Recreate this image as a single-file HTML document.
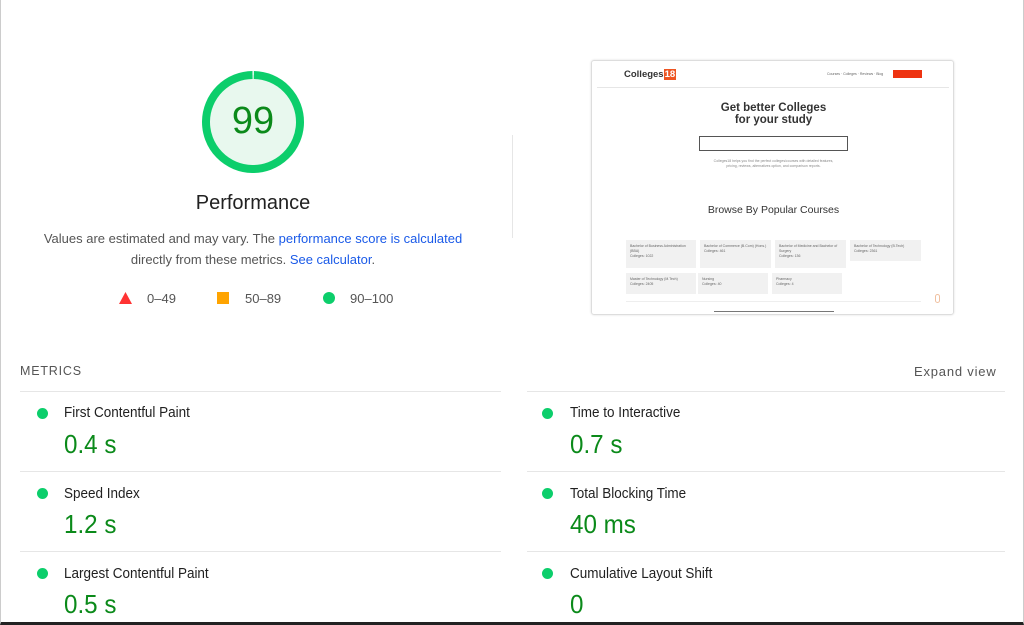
<!DOCTYPE html>
<html><head><meta charset="utf-8"><style>
*{margin:0;padding:0;box-sizing:border-box}
body{width:1024px;height:625px;overflow:hidden;background:#fff;font-family:"Liberation Sans",Arial,sans-serif;position:relative;color:#212121}
.a{position:absolute}
.frame{left:0;top:0;width:1024px;height:625px;border-left:1px solid #ccc;border-right:1px solid #ccc;border-bottom:3px solid #222}
.c{text-align:center}
.desc{left:20px;width:466px;top:228px;font-size:13px;line-height:21px;color:#555;text-align:center}
.desc span{color:#1a5ae8}
.line{height:1px;background:#e6e6e6}
.dot{width:11px;height:11px;border-radius:50%;background:#0cce6b}
.t{font-size:14.5px;color:#212121;transform:scaleX(.93);transform-origin:left}
.v{font-size:26px;color:#0b8a1a;transform:scaleX(.93);transform-origin:left}
.ss{left:591px;top:60px;width:363px;height:255px;border:1px solid #ddd;border-radius:3px;box-shadow:0 0 2px #ddd;overflow:hidden}
.card{background:#f1f1f1;font-size:3.5px;color:#666;padding:4px;line-height:5px}
</style></head><body>
<div class="a frame"></div>
<svg class="a" style="left:200px;top:69px" width="106" height="106">
<circle cx="53" cy="53" r="47" fill="#e8f8ee" stroke="#0cce6b" stroke-width="8" stroke-dasharray="293.5 2" transform="rotate(-89 53 53)"/>
</svg>
<div class="a c" style="left:200px;top:101px;width:106px;font-size:38px;color:#0b8a1a;line-height:44px;top:99px">99</div>
<div class="a c" style="left:153px;top:192px;width:200px;font-size:20px;color:#212121">Performance</div>
<div class="a desc">Values are estimated and may vary. The <span>performance score is calculated</span><br>directly from these metrics. <span>See calculator</span>.</div>
<svg class="a" style="left:119px;top:292px" width="13" height="12"><polygon points="6.5,0 13,12 0,12" fill="#f33"/></svg>
<div class="a" style="left:147px;top:291px;font-size:13px;color:#555">0–49</div>
<div class="a" style="left:217px;top:292px;width:12px;height:12px;background:#ffa400"></div>
<div class="a" style="left:245px;top:291px;font-size:13px;color:#555">50–89</div>
<div class="a dot" style="left:323px;top:292px;width:12px;height:12px"></div>
<div class="a" style="left:350px;top:291px;font-size:13px;color:#555">90–100</div>
<div class="a" style="left:512px;top:135px;width:1px;height:103px;background:#e6e6e6"></div>

<div class="a ss">
 <div class="a" style="left:32px;top:8px;font-size:9.5px;font-weight:bold;color:#333">Colleges<span style="background:#e52;color:#fff;padding:0 1px">18</span></div>
 <div class="a" style="left:235px;top:11px;font-size:3.5px;color:#666">Courses · Colleges · Reviews · Blog</div>
 <div class="a" style="left:301px;top:9px;width:29px;height:8px;background:#e31"></div>
 <div class="a line" style="left:5px;top:26px;width:352px"></div>
 <div class="a c" style="left:80px;top:41px;width:203px;font-size:11.5px;font-weight:bold;color:#333;line-height:12px">Get better Colleges<br>for your study</div>
 <div class="a" style="left:107px;top:75px;width:149px;height:15px;border:1.5px solid #555"></div>
 <div class="a c" style="left:100px;top:98px;width:163px;font-size:3.5px;color:#888;line-height:5px">Colleges18 helps you find the perfect colleges/courses with detailed features,<br>pricing, reviews, alternatives option, and comparison reports.</div>
 <div class="a c" style="left:80px;top:143px;width:203px;font-size:10.5px;color:#333">Browse By Popular Courses</div>
 <div class="a card" style="left:34px;top:179px;width:70px;height:28px">Bachelor of Business Administration (BBA)<br>Colleges: 1022</div>
 <div class="a card" style="left:108px;top:179px;width:71px;height:28px">Bachelor of Commerce (B.Com) (Hons.)<br>Colleges: 461</div>
 <div class="a card" style="left:183px;top:179px;width:71px;height:28px">Bachelor of Medicine and Bachelor of Surgery<br>Colleges: 136</div>
 <div class="a card" style="left:258px;top:179px;width:71px;height:21px">Bachelor of Technology (B.Tech)<br>Colleges: 2361</div>
 <div class="a card" style="left:34px;top:212px;width:70px;height:21px">Master of Technology (M.Tech)<br>Colleges: 2405</div>
 <div class="a card" style="left:106px;top:212px;width:70px;height:21px">Nursing<br>Colleges: 40</div>
 <div class="a card" style="left:180px;top:212px;width:70px;height:21px">Pharmacy<br>Colleges: 4</div>
 <div class="a line" style="left:34px;top:240px;width:295px;background:#eee"></div>
 <div class="a" style="left:122px;top:250px;width:120px;height:1px;background:#777"></div>
 <div class="a" style="left:343px;top:233px;width:5px;height:9px;border:1px solid #f0c0a0;border-radius:3px"></div>
</div>

<div class="a" style="left:20px;top:364px;font-size:12.5px;letter-spacing:.8px;color:#555">METRICS</div>
<div class="a" style="left:914px;top:364px;font-size:13px;color:#555;letter-spacing:.8px">Expand view</div>
<div class="a line" style="left:20px;top:391px;width:481px"></div>
<div class="a line" style="left:527px;top:391px;width:478px"></div>
<div class="a line" style="left:20px;top:471px;width:481px"></div>
<div class="a line" style="left:527px;top:471px;width:478px"></div>
<div class="a line" style="left:20px;top:551px;width:481px"></div>
<div class="a line" style="left:527px;top:551px;width:478px"></div>

<div class="a dot" style="left:37px;top:408px"></div><div class="a t" style="left:64px;top:405px">First Contentful Paint</div><div class="a v" style="left:64px;top:429px">0.4 s</div>
<div class="a dot" style="left:37px;top:488px"></div><div class="a t" style="left:64px;top:486px">Speed Index</div><div class="a v" style="left:64px;top:509px">1.2 s</div>
<div class="a dot" style="left:37px;top:568px"></div><div class="a t" style="left:64px;top:566px">Largest Contentful Paint</div><div class="a v" style="left:64px;top:589px">0.5 s</div>
<div class="a dot" style="left:542px;top:408px"></div><div class="a t" style="left:570px;top:405px">Time to Interactive</div><div class="a v" style="left:570px;top:429px">0.7 s</div>
<div class="a dot" style="left:542px;top:488px"></div><div class="a t" style="left:570px;top:486px">Total Blocking Time</div><div class="a v" style="left:570px;top:509px">40 ms</div>
<div class="a dot" style="left:542px;top:568px"></div><div class="a t" style="left:570px;top:566px">Cumulative Layout Shift</div><div class="a v" style="left:570px;top:589px">0</div>
</body></html>
